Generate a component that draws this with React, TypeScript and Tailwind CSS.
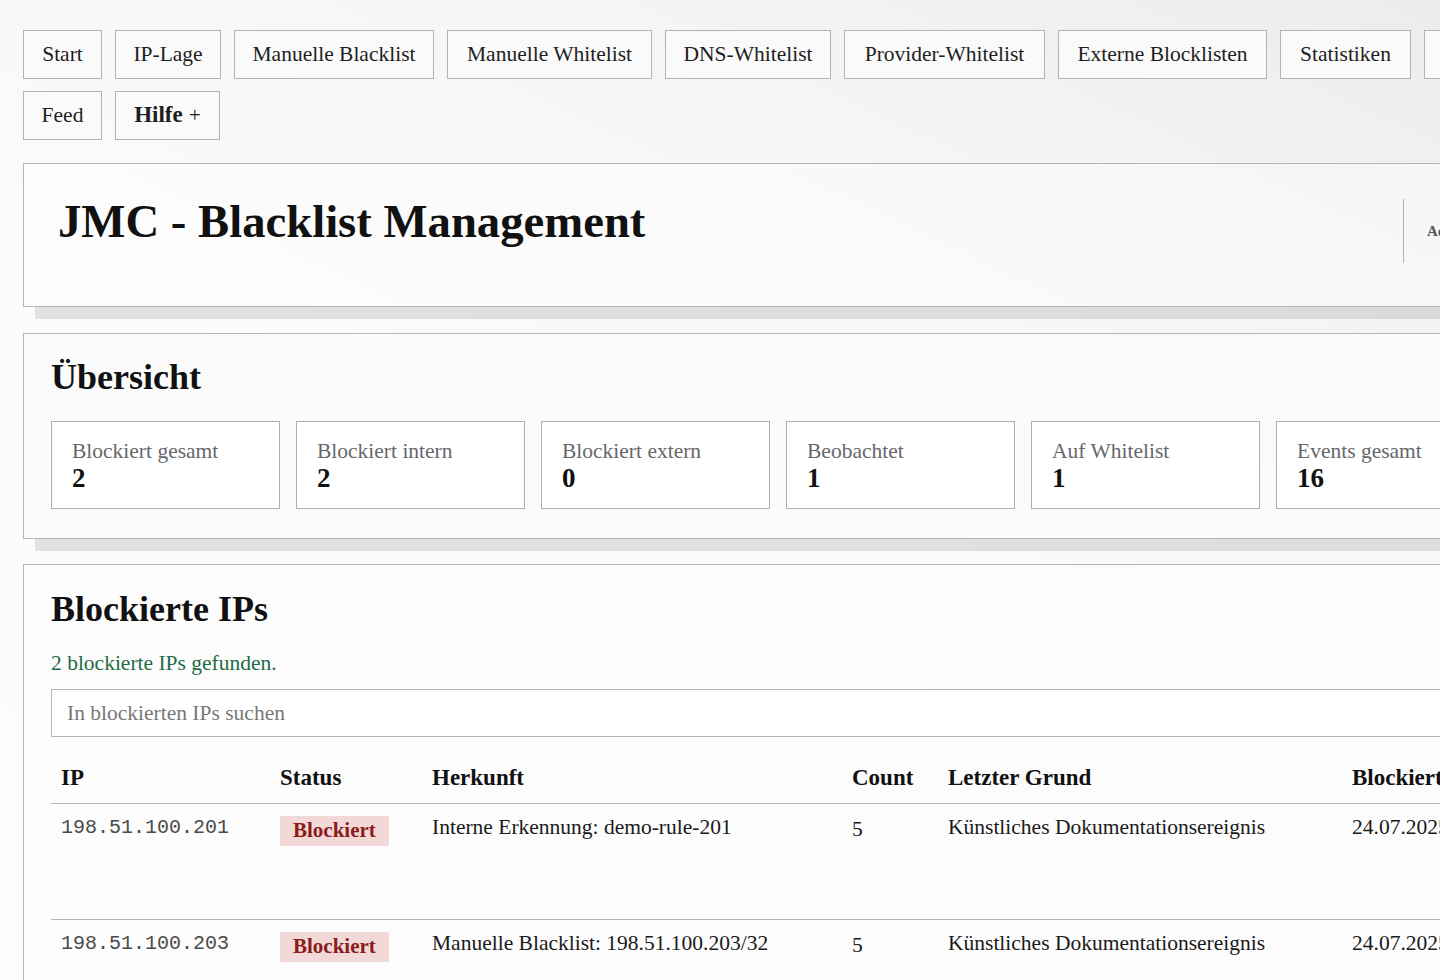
import React from "react";

const navRow1: [string, string][] = [
  ["Start", "w-[79px]"],
  ["IP-Lage", "w-[106px]"],
  ["Manuelle Blacklist", "w-[200px]"],
  ["Manuelle Whitelist", "w-[205px]"],
  ["DNS-Whitelist", "w-[166px]"],
  ["Provider-Whitelist", "w-[201px]"],
  ["Externe Blocklisten", "w-[209px]"],
  ["Statistiken", "w-[131px]"],
];

const stats: [string, string][] = [
  ["Blockiert gesamt", "2"],
  ["Blockiert intern", "2"],
  ["Blockiert extern", "0"],
  ["Beobachtet", "1"],
  ["Auf Whitelist", "1"],
  ["Events gesamt", "16"],
];

const rows = [
  {
    ip: "198.51.100.201",
    origin: "Interne Erkennung: demo-rule-201",
    count: "5",
    reason: "Künstliches Dokumentationsereignis",
    date: "24.07.2025 10:12",
  },
  {
    ip: "198.51.100.203",
    origin: "Manuelle Blacklist: 198.51.100.203/32",
    count: "5",
    reason: "Künstliches Dokumentationsereignis",
    date: "24.07.2025 10:14",
  },
];

const serif = "font-['Liberation_Serif','Times_New_Roman',serif]";
const btn =
  "h-[49px] flex items-center justify-center border border-[#b3b3b3] bg-[#fafafa] text-[21.5px] text-[#1e1e1e]";

export default function App() {
  return (
    <div
      className={`h-[980px] w-full overflow-hidden bg-[linear-gradient(205deg,#ececec_0%,#f6f6f6_28%,#fbfbfb_55%,#fcfcfc_100%)] pt-[30px] pl-[23px] ${serif} text-[#1a1a1a]`}
    >
      <div className="w-[1510px]">
        {/* Navigation */}
        <nav className="flex flex-wrap gap-x-[13px] gap-y-[12px]">
          {navRow1.map(([label, w]) => (
            <div key={label} className={`${btn} ${w}`}>
              {label}
            </div>
          ))}
          <div className={`${btn} w-[96px] bg-[#ededed]`}>Admin</div>
          <div className={`${btn} w-[79px]`}>Feed</div>
          <div className={`${btn} w-[105px]`}>
            <span className="font-bold text-[23px]">Hilfe</span>
            <span className="ml-[6px]">+</span>
          </div>
        </nav>

        {/* Header card */}
        <header className="mt-[23px] h-[144px] border border-[#b5b5b5] bg-white/40 shadow-[12px_12px_0_rgba(0,0,0,0.1)] flex justify-between px-[34px]">
          <h1 className="pt-[30px] text-[46.7px] leading-[55px] font-bold text-[#111] whitespace-nowrap">
            JMC - Blacklist Management
          </h1>
          <div className="mt-[35px] h-[64px] w-[95px] border-l border-[#b0b0b0] pl-[23px] flex items-center">
            <span className="text-[15px] font-bold text-[#555] whitespace-nowrap">Admin</span>
          </div>
        </header>

        {/* Übersicht */}
        <section className="mt-[26px] border border-[#b5b5b5] bg-[#fbfbfb]/80 shadow-[12px_12px_0_rgba(0,0,0,0.1)] px-[27px] pt-[22px] pb-[29px]">
          <h2 className="text-[36px] leading-[43px] font-bold text-[#111] mb-[22px]">Übersicht</h2>
          <div className="grid grid-cols-6 gap-[16px]">
            {stats.map(([label, value]) => (
              <div key={label} className="border border-[#b0b0b0] bg-white px-[20px] py-[16px]">
                <div className="text-[21.5px] leading-[27px] text-[#66676b]">{label}</div>
                <div className="text-[27px] leading-[27px] font-bold text-[#111]">{value}</div>
              </div>
            ))}
          </div>
        </section>

        {/* Blockierte IPs */}
        <section className="mt-[25px] border border-[#b5b5b5] bg-[#fcfcfc]/80 shadow-[12px_12px_0_rgba(0,0,0,0.1)] px-[27px] pt-[23px] pb-[28px]">
          <h2 className="text-[36px] leading-[43px] font-bold text-[#111]">Blockierte IPs</h2>
          <p className="mt-[19px] text-[21.5px] leading-[27px] text-[#1f6b45]">2 blockierte IPs gefunden.</p>
          <div className="mt-[12px] h-[48px] border border-[#b3b3b3] bg-white flex items-center px-[15px] text-[21.5px] text-[#777]">
            In blockierten IPs suchen
          </div>
          <table className="mt-[15px] w-full table-fixed border-collapse">
            <colgroup>
              <col className="w-[219px]" />
              <col className="w-[152px]" />
              <col className="w-[420px]" />
              <col className="w-[96px]" />
              <col className="w-[404px]" />
              <col />
            </colgroup>
            <thead>
              <tr className="border-b border-[#b5b5b5]">
                {["IP", "Status", "Herkunft", "Count", "Letzter Grund", "Blockiert seit"].map((h) => (
                  <th
                    key={h}
                    className="px-[10px] py-[12px] text-left text-[23px] leading-[27px] font-bold text-[#111] whitespace-nowrap"
                  >
                    {h}
                  </th>
                ))}
              </tr>
            </thead>
            <tbody>
              {rows.map((r) => (
                <tr key={r.ip} className="border-b border-[#b5b5b5] h-[116px] align-top">
                  <td className="px-[10px] pt-[12px] font-['Liberation_Mono','Courier_New',monospace] text-[20px] leading-[24px] text-[#4a4a4a]">
                    {r.ip}
                  </td>
                  <td className="px-[10px] pt-[12px]">
                    <span className="inline-flex h-[30px] items-center bg-[#f2d8d6] px-[13px] text-[21px] font-bold text-[#8a1c1c]">
                      Blockiert
                    </span>
                  </td>
                  <td className="px-[10px] pt-[10px] text-[21.5px] leading-[27px] whitespace-nowrap">{r.origin}</td>
                  <td className="px-[10px] pt-[12px] text-[21.5px] leading-[27px]">{r.count}</td>
                  <td className="px-[10px] pt-[10px] text-[21.5px] leading-[27px] whitespace-nowrap">{r.reason}</td>
                  <td className="px-[10px] pt-[10px] text-[21.5px] leading-[27px] whitespace-nowrap">{r.date}</td>
                </tr>
              ))}
            </tbody>
          </table>
        </section>
      </div>
    </div>
  );
}
